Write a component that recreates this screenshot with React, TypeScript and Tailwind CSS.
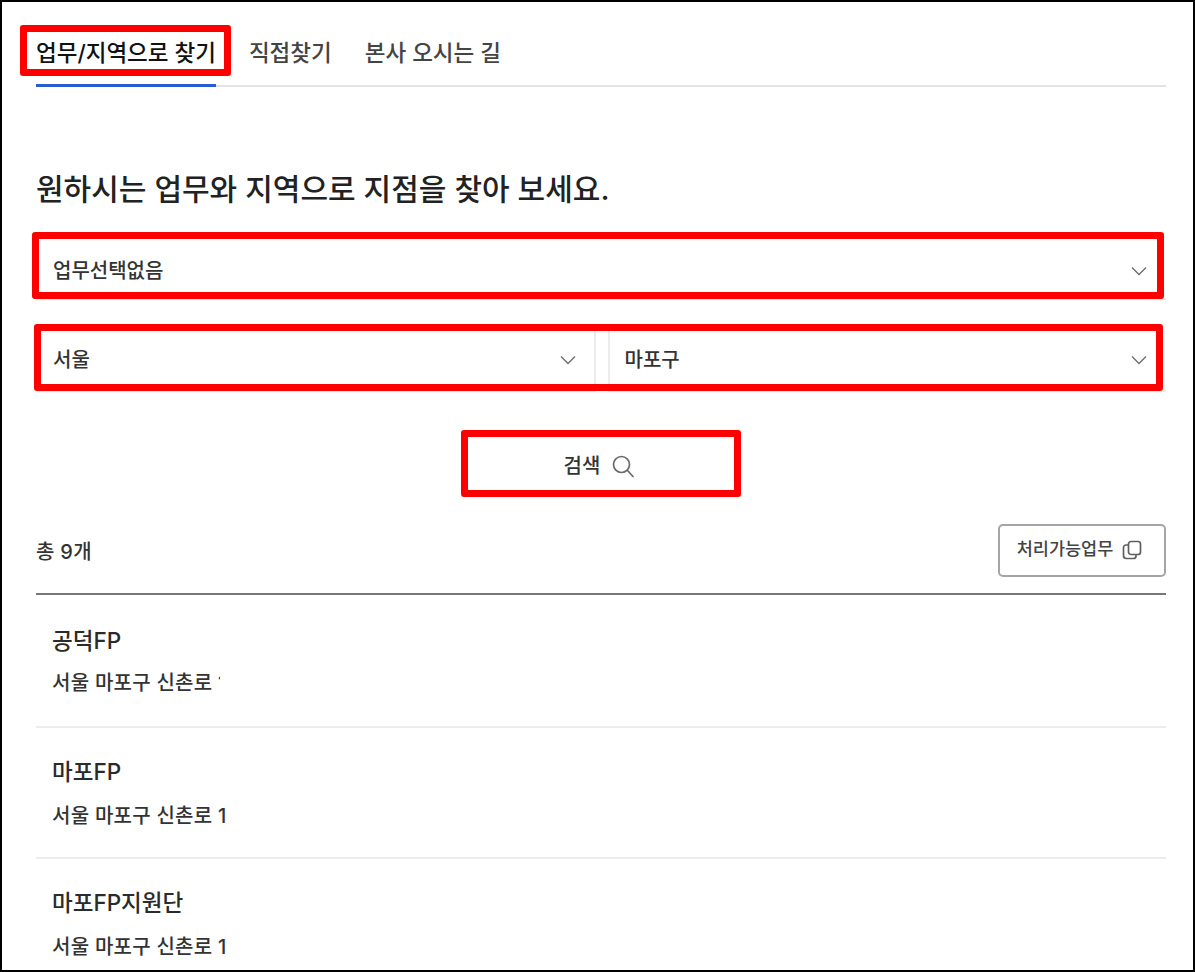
const font = { fontFamily: '"Inter", "Noto Sans CJK KR", sans-serif' };

const Chevron = () => (
  <svg width="16" height="10" viewBox="0 0 16 10" fill="none" stroke="#6b6b6b" strokeWidth="1.3">
    <path d="M1 1.5 L8 8.5 L15 1.5" />
  </svg>
);

const SearchIcon = () => (
  <svg width="24" height="24" viewBox="0 0 24 24" fill="none" stroke="#6a6a6a" strokeWidth="1.7">
    <circle cx="10.5" cy="10.5" r="8" />
    <path d="M16.5 16.5 L22 22.5" strokeLinecap="round" />
  </svg>
);

const CopyIcon = () => (
  <svg width="20" height="20" viewBox="0 0 20 20" fill="none" stroke="#5f5f5f" strokeWidth="1.7">
    <rect x="6.5" y="1.5" width="12" height="13" rx="2.5" />
    <path d="M6 5 H4 A2.5 2.5 0 0 0 1.5 7.5 V15.5 A3 3 0 0 0 4.5 18.5 H11.5 A2.5 2.5 0 0 0 14 16 V15" />
  </svg>
);

const Select = ({ label, className }: { label: string; className: string }) => (
  <div className={`flex h-[64px] items-center justify-between border-b-2 border-[#ececec] bg-white text-[20px] font-medium text-[#333] ${className}`}>
    <span>{label}</span>
    <Chevron />
  </div>
);

const Branch = ({ name, clip }: { name: string; clip?: boolean }) => (
  <div className="flex h-[131px] flex-col border-b-2 border-[#ececec] pl-4 pt-[28px] last:border-b-0">
    <div className="text-[22.5px] font-medium leading-[32px] text-[#2b2b2b]">{name}</div>
    <div className={`whitespace-nowrap text-[20px] font-medium leading-[32px] tracking-[0.25px] text-[#333] ${clip ? 'mt-[10px] w-[168px] overflow-hidden' : 'mt-[12px]'}`}>서울 마포구 신촌로 1</div>
  </div>
);

const Mark = ({ className }: { className: string }) => (
  <div className={`absolute rounded-[3px] border-[7px] border-[#ff0000] ${className}`} />
);

export default function App() {
  return (
    <div className="relative h-[972px] w-[1195px] overflow-hidden border-2 border-black bg-white" style={font}>
      <div className="pl-[34px] pr-[27px]">
        <div className="flex h-[85px] items-end gap-[33px] border-b-2 border-[#e3e3e3]">
          <div className="-mb-[2px] h-[71px] border-b-[3px] border-[#2a5bd0] pt-[21px] text-[22.5px] font-medium leading-[32px] text-[#111]">업무/지역으로 찾기</div>
          <div className="h-[69px] pt-[21px] text-[22.5px] font-medium leading-[32px] text-[#444]">직접찾기</div>
          <div className="h-[69px] pt-[21px] text-[22.5px] font-medium leading-[32px] text-[#444]">본사 오시는 길</div>
        </div>

        <h1 className="mt-[82px] text-[30px] font-medium leading-[40px] text-[#222]">원하시는 업무와 지역으로 지점을 찾아 보세요.</h1>

        <Select label="업무선택없음" className="mt-[27px] pl-[17px] pr-[19px] pt-[8px]" />
        <div className="mt-[28px] flex gap-[12px]">
          <Select label="서울" className="flex-1 border-r-2 pl-[17px] pr-[18px] pt-[2px]" />
          <Select label="마포구" className="flex-1 border-l-2 pl-[15px] pr-[19px] pt-[2px]" />
        </div>

        <div className="mt-[46px] flex h-[56px] items-center justify-center gap-[11px] pr-[3px] text-[20px] font-medium text-[#333]">
          <span>검색</span>
          <SearchIcon />
        </div>

        <div className="mt-[30px] flex h-[71px] items-start justify-between border-b-2 border-[#777]">
          <div className="pt-[12px] text-[20px] font-medium leading-[32px] tracking-[0.3px] text-[#333]">총 9개</div>
          <div className="flex h-[53px] w-[168px] items-center justify-center gap-[9px] rounded-[5px] border-2 border-[#a5a5a5] pb-[2px] pr-[5px] text-[17.5px] font-medium text-[#444]">
            <span>처리가능업무</span>
            <CopyIcon />
          </div>
        </div>

        <div className="mt-[2px]">
          <Branch name="공덕FP" clip />
          <Branch name="마포FP" />
          <Branch name="마포FP지원단" />
        </div>
      </div>

      <Mark className="left-[18px] top-[23px] h-[51px] w-[211px]" />
      <Mark className="left-[30px] top-[230px] h-[67px] w-[1132px]" />
      <Mark className="left-[32px] top-[322px] h-[67px] w-[1129px]" />
      <Mark className="left-[459px] top-[428px] h-[67px] w-[280px]" />
    </div>
  );
}
